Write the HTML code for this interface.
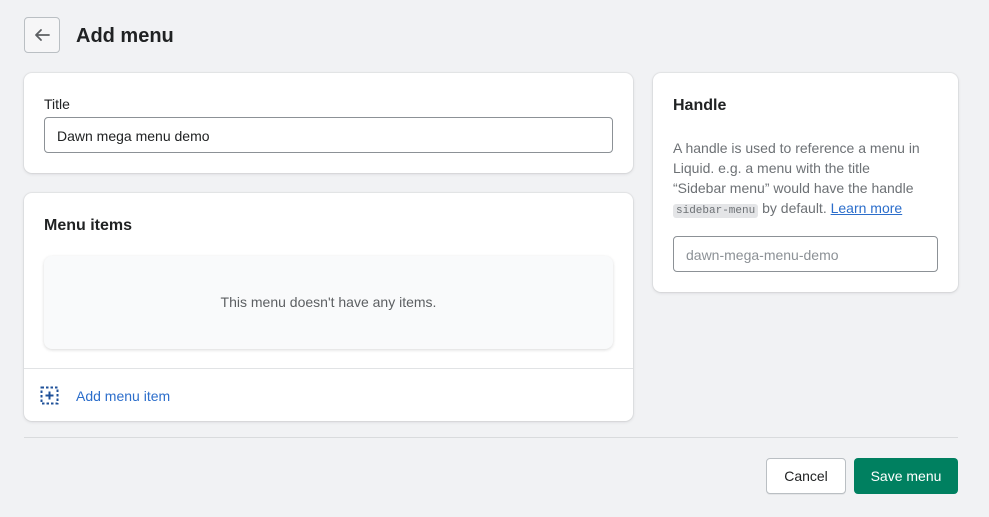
<!DOCTYPE html>
<html><head><style>
*{box-sizing:border-box;margin:0;padding:0}
body{width:989px;height:517px;background:#f1f2f4;font-family:"Liberation Sans",sans-serif;color:#202223;position:relative;overflow:hidden;font-size:14px}
.card{position:absolute;background:#fff;border-radius:8px;box-shadow:0 0 0 1px rgba(63,63,68,.05),0 1px 3px rgba(63,63,68,.15)}
.abs{position:absolute}
</style></head><body>
<div class="abs" style="left:24px;top:17px;width:36px;height:36px;border:1px solid #babfc3;border-radius:4px;background:#f6f6f7">
<svg width="34" height="34" viewBox="0 0 34 34" style="position:absolute;left:0;top:0"><path d="M24 17H11M16 12l-5 5 5 5" stroke="#5c5f62" stroke-width="1.8" fill="none" stroke-linecap="round" stroke-linejoin="round"/></svg></div>
<div class="abs" style="left:76px;top:25px;font-size:20px;font-weight:bold">Add menu</div>

<div class="card" style="left:24px;top:73px;width:609px;height:100px">
<div class="abs" style="left:20px;top:23px;font-size:14px">Title</div>
<div class="abs" style="left:20px;top:44px;width:569px;height:36px;border:1px solid #8c9196;border-radius:4px;padding:10px 12px;font-size:14px">Dawn mega menu demo</div>
</div>

<div class="card" style="left:24px;top:193px;width:609px;height:228px">
<div class="abs" style="left:20px;top:24px;font-size:16px;font-weight:bold">Menu items</div>
<div class="abs" style="left:20px;top:63px;width:569px;height:93px;background:#f9fafb;border-radius:8px;box-shadow:0 1px 3px rgba(0,0,0,.15);text-align:center;line-height:93px;color:#5c5f62;font-size:14px">This menu doesn't have any items.</div>
<div class="abs" style="left:0;top:175px;width:609px;border-top:1px solid #e1e3e5"></div>
<svg class="abs" style="left:16px;top:193px" width="20" height="20" viewBox="0 0 20 20"><rect x="1.5" y="1.5" width="16" height="16" fill="none" stroke="#1f5199" stroke-width="2" stroke-dasharray="2.5 2"/><path d="M9.5 5.5v8M5.5 9.5h8" stroke="#1f5199" stroke-width="2"/></svg>
<div class="abs" style="left:52px;top:195px;color:#2c6ecb;font-size:14px">Add menu item</div>
</div>

<div class="card" style="left:653px;top:73px;width:305px;height:219px">
<div class="abs" style="left:20px;top:24px;font-size:16px;font-weight:bold">Handle</div>
<div class="abs" style="left:20px;top:65px;width:280px;font-size:14px;line-height:20px;color:#6d7175;white-space:nowrap">A handle is used to reference a menu in<br>Liquid. e.g. a menu with the title<br>“Sidebar menu” would have the handle<br><span style="font-family:'Liberation Mono',monospace;font-size:11px;background:#e4e5e7;padding:1px 3px;border-radius:3px">sidebar-menu</span> by default. <span style="color:#2c6ecb;text-decoration:underline">Learn more</span></div>
<div class="abs" style="left:20px;top:163px;width:265px;height:36px;border:1px solid #8c9196;border-radius:4px;padding:10px 12px;color:#8c9196;font-size:14px">dawn-mega-menu-demo</div>
</div>

<div class="abs" style="left:24px;top:437px;width:934px;border-top:1px solid #d9dbdd"></div>
<div class="abs" style="left:766px;top:458px;width:80px;height:36px;border:1px solid #babfc3;border-radius:4px;background:#fff;text-align:center;line-height:34px;font-size:14px;box-shadow:0 1px 0 rgba(0,0,0,.05)">Cancel</div>
<div class="abs" style="left:854px;top:458px;width:104px;height:36px;border-radius:4px;background:#008060;color:#fff;text-align:center;line-height:36px;font-size:14px">Save menu</div>
</body></html>
